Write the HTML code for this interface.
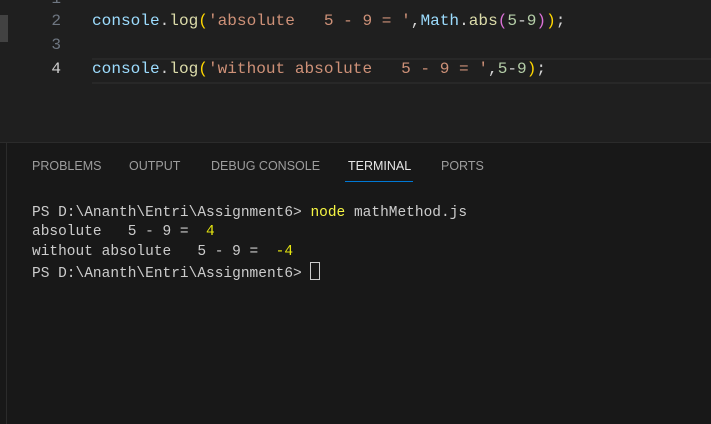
<!DOCTYPE html>
<html><head><style>
body{margin:0;width:711px;height:423px;overflow:hidden;background:#1f1f1f;position:relative;font-family:"Liberation Mono",monospace}
.ed{position:absolute;left:0;top:0;width:711px;height:142px;background:#1f1f1f}
.ln{position:absolute;left:0;width:61px;text-align:right;color:#6e7681;font-size:16.1px}
.code{position:absolute;left:92px;font-size:16.1px;white-space:pre;color:#d4d4d4}
.cur{position:absolute;left:92px;right:0;top:58px;height:22px;border-top:2px solid #282828;border-bottom:2px solid #282828}
.f{color:#9cdcfe}.fn{color:#dcdcaa}.s{color:#ce9178}.n{color:#b5cea8}.y{color:#ffd700}.p{color:#da70d6}.b{color:#179fff}.c{color:#4ec9b0}
.panel{position:absolute;left:0;top:142px;width:711px;height:281px;background:#181818;border-top:1px solid #2b2b2b}
.vl{position:absolute;left:6px;top:0;bottom:0;width:1px;background:#2b2b2b}
.tab{position:absolute;top:16px;font-family:"Liberation Sans",sans-serif;font-size:12.5px;color:#9d9d9d}
.term{position:absolute;left:32px;top:61px;font-size:14.5px;line-height:19.3px;white-space:pre;color:#cccccc}
.bar{position:absolute;left:0;top:15px;width:8px;height:27px;background:#424242}
</style></head><body>
<div class="ed">
<div class="bar"></div>
<div class="ln" style="top:-10px;color:#6e7681">1</div>
<div class="ln" style="top:12px">2</div>
<div class="ln" style="top:36px">3</div>
<div class="ln" style="top:60px;color:#cccccc">4</div>
<div class="cur"></div>
<div class="code" style="top:12px"><span class="f">console</span>.<span class="fn">log</span><span class="y">(</span><span class="s">'absolute   5 - 9 = '</span>,<span class="f">Math</span>.<span class="fn">abs</span><span class="p">(</span><span class="n">5</span>-<span class="n">9</span><span class="p">)</span><span class="y">)</span>;</div>
<div class="code" style="top:60px"><span class="f">console</span>.<span class="fn">log</span><span class="y">(</span><span class="s">'without absolute   5 - 9 = '</span>,<span class="n">5</span>-<span class="n">9</span><span class="y">)</span>;</div>
</div>
<div class="panel">
<div class="vl"></div>
<div class="tab" style="left:32px">PROBLEMS</div>
<div class="tab" style="left:129px">OUTPUT</div>
<div class="tab" style="left:211px">DEBUG CONSOLE</div>
<div class="tab" style="left:348px;color:#e7e7e7">TERMINAL</div>
<div style="position:absolute;left:345px;top:38px;width:68px;height:1px;background:#0078d4"></div>
<div class="tab" style="left:441px">PORTS</div>
<div class="term">PS D:\Ananth\Entri\Assignment6&gt; <span style="color:#f5f543">node</span> mathMethod.js
absolute   5 - 9 =  <span style="color:#e5e510">4</span>
without absolute   5 - 9 =  <span style="color:#e5e510">-4</span>
PS D:\Ananth\Entri\Assignment6&gt; <span style="display:inline-block;width:8px;height:16px;border:1px solid #cccccc;vertical-align:-3px"></span></div>
</div>
</body></html>
